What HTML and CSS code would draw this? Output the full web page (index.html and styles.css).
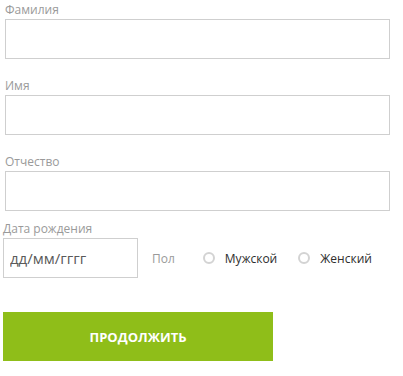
FILE: index.html
```html
<!DOCTYPE html>
<html lang="ru">
  <head>
    <meta charset="UTF-8" />
    <meta name="viewport" content="width=device-width, initial-scale=1.0" />
    <title>Анкета</title>
    <link rel="stylesheet" href="styles.css">
  </head>
  <body>
    <form class="form">
      <div class="field">
        <label class="label" for="last-name">Фамилия</label>
        <input class="input" id="last-name" type="text" />
      </div>
      <div class="field">
        <label class="label" for="first-name">Имя</label>
        <input class="input" id="first-name" type="text" />
      </div>
      <div class="field">
        <label class="label" for="middle-name">Отчество</label>
        <input class="input" id="middle-name" type="text" />
      </div>

      <div class="birth">
        <label class="label" for="birth-date">Дата рождения</label>
        <div class="birth-row">
          <input class="input date" id="birth-date" type="text" placeholder="дд/мм/гггг" />
          <span class="sex-label">Пол</span>
          <label class="radio"><input type="radio" name="sex" value="m" /><span class="dot"></span>Мужской</label>
          <label class="radio"><input type="radio" name="sex" value="f" /><span class="dot"></span>Женский</label>
        </div>
      </div>

      <button class="btn" type="button">ПРОДОЛЖИТЬ</button>
    </form>
  </body>
</html>
```

FILE: styles.css
```css
* {
  margin: 0;
  padding: 0;
  box-sizing: border-box;
}
body {
  font-family: "Open Sans", "Liberation Sans", sans-serif;
  background-color: #fff;
}
.form {
  width: 403px;
}
.field {
  padding-left: 5px;
  width: 390px;
  margin-bottom: 17px;
}
.label {
  display: block;
  font-size: 12px;
  line-height: 19px;
  color: #9a9a9a;
}
.input {
  display: block;
  width: 100%;
  height: 40px;
  border: 1px solid #cfcfcf;
  background: #fff;
  outline: none;
  font-family: inherit;
  font-size: 15px;
  padding: 0 6px;
}
.birth {
  margin-top: -9px;
  padding-left: 3px;
}
.birth-row {
  display: flex;
  align-items: center;
}
.date {
  width: 135px;
}
.date::placeholder {
  color: #5a5a5a;
}
.sex-label {
  margin-left: 14px;
  font-size: 12px;
  color: #9a9a9a;
}
.radio {
  display: flex;
  align-items: center;
  font-size: 12px;
  color: #2e2e2e;
  cursor: pointer;
}
.radio input {
  display: none;
}
.dot {
  width: 12px;
  height: 12px;
  border: 2px solid #d3d3d3;
  border-radius: 50%;
  margin-right: 10px;
}
.sex-label + .radio {
  margin-left: 28px;
}
.radio + .radio {
  margin-left: 21px;
}
.btn {
  display: block;
  margin: 34px 0 0 3px;
  width: 270px;
  height: 49px;
  border: none;
  background-color: #8fbe19;
  color: #fff;
  font-family: inherit;
  font-weight: 700;
  font-size: 13px;
  cursor: pointer;
}
```
